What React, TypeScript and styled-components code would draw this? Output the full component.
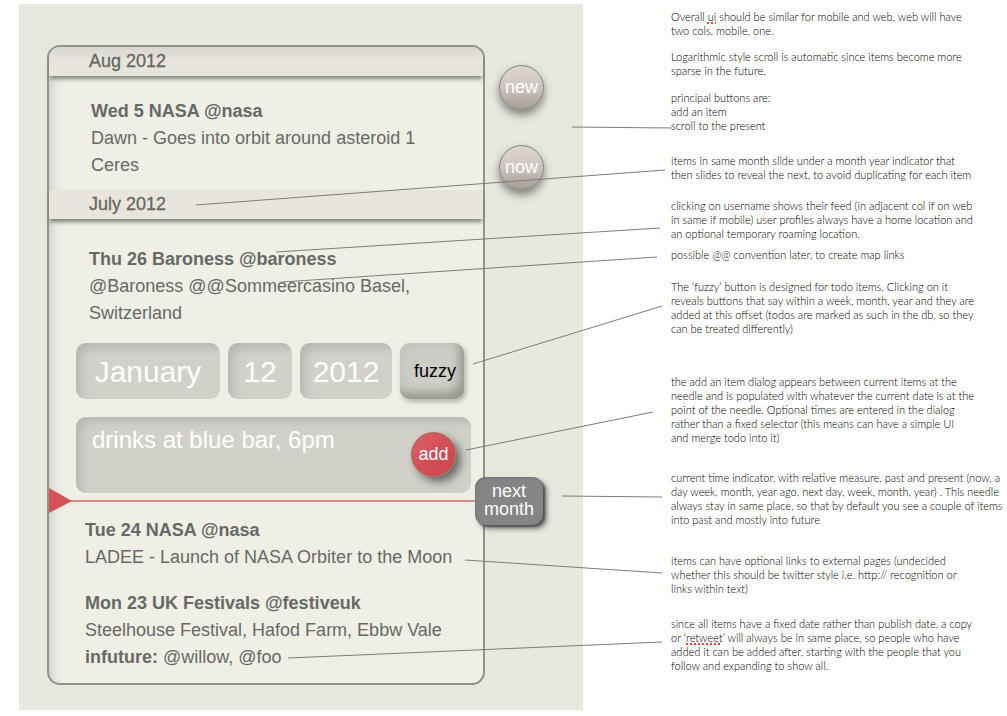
import React from "react";
import styled, { createGlobalStyle } from "styled-components";

const GlobalStyle = createGlobalStyle`
  * { box-sizing: border-box; }
  body {
    margin: 0;
    background: #fff;
    font-family: "Liberation Sans", Arial, sans-serif;
  }
`;

const Page = styled.div`
  position: relative;
  display: grid;
  grid-template-columns: minmax(0, 564px) minmax(0, 1fr);
  padding: 4px 0 6px 19px;
`;

const Board = styled.main`
  display: flex;
  align-items: flex-start;
  gap: 14px;
  padding: 41px 16px 25px 28px;
  background: #e7e9df;
`;

const Card = styled.section`
  flex: 0 1 438px;
  min-width: 0;
  border: 2px solid #92938f;
  border-radius: 13px;
  background: linear-gradient(to right, #d4d4cc 0, #e6e6de 6px, #efefe6 14px);
`;

const MonthHeader = styled.h2<{ $first?: boolean }>`
  position: relative;
  margin: 0;
  padding-left: 40px;
  height: 29px;
  line-height: 29px;
  font-size: 18px;
  font-weight: 400;
  color: #666663;
  -webkit-text-stroke: 0.3px #666663;
  border-radius: ${(p) => (p.$first ? "11px 11px 0 0" : "0")};
  background: ${(p) =>
    p.$first ? "linear-gradient(#d9d6cf 0, #e7e4dc 13px)" : "#e8e5dd"};
  box-shadow: 0 4px 4px -1px rgba(95, 97, 88, 0.75);
`;

const Items = styled.div<{ $indent: number; $top: number; $bottom: number }>`
  display: flex;
  flex-direction: column;
  gap: 19px;
  padding: ${(p) => `${p.$top}px 20px ${p.$bottom}px ${p.$indent}px`};
`;

const Item = styled.article`
  font-size: 18px;
  line-height: 27px;
  color: #686866;
`;

const ItemTitle = styled.h3`
  margin: 0;
  font-size: 18px;
  font-weight: 700;
`;

const ItemText = styled.p`
  margin: 0;
`;

const UserLink = styled.a`
  color: inherit;
  text-decoration: none;
`;

const Composer = styled.form`
  position: relative;
  display: flex;
  flex-direction: column;
  gap: 18px;
  padding: 0 12px 0 27px;
`;

const FieldRow = styled.div`
  display: flex;
  gap: 8px;
`;

const DateField = styled.input<{ $width: number }>`
  flex: 0 1 ${(p) => p.$width}px;
  min-width: 0;
  height: 56px;
  padding: 2px 0 0;
  border: 0;
  border-radius: 10px;
  background: #d1d1ca;
  box-shadow: inset 6px 6px 9px -1px #b7b8b1;
  color: #fff;
  font: 30px "Liberation Sans", Arial, sans-serif;
  text-align: center;
`;

const FuzzyButton = styled.button`
  flex: 0 1 64px;
  height: 56px;
  padding: 0 0 0 6px;
  border: 0;
  border-radius: 10px;
  background: #cdcec6;
  box-shadow: inset -7px -9px 10px -2px #989990, inset 4px 4px 8px #c3c4bc,
    2px 3px 5px rgba(90, 90, 80, 0.4);
  color: #000;
  font: 18px "Liberation Sans", Arial, sans-serif;
`;

const NoteField = styled.textarea`
  display: block;
  width: 100%;
  height: 76px;
  padding: 8px 16px;
  border: 0;
  border-radius: 10px;
  resize: none;
  overflow: hidden;
  background: #d1d1ca;
  box-shadow: inset 6px 6px 9px -1px #b7b8b1;
  color: #fff;
  font: 24px/30px "Liberation Sans", Arial, sans-serif;
`;

const RoundButton = styled.button`
  width: 45px;
  height: 45px;
  padding: 0;
  border: 1px solid #85807b;
  border-radius: 50%;
  background: linear-gradient(#ddd5ce 0, #cdc5be 50%, #a59d97 100%);
  box-shadow: 0 5px 9px rgba(60, 60, 55, 0.6);
  color: #fff;
  font: 18px "Liberation Sans", Arial, sans-serif;
`;

const AddButton = styled(RoundButton)`
  position: absolute;
  right: 27px;
  bottom: 16px;
  border-color: #a8635f;
  background: linear-gradient(135deg, #d9666a 0, #d44f55 50%, #cc474d 100%);
  box-shadow: 5px 5px 9px rgba(60, 60, 55, 0.7);
`;

const Needle = styled.div`
  position: relative;
  height: 24px;
`;

const Pointer = styled.svg`
  position: absolute;
  left: 0;
  top: -6px;
  width: 100%;
  height: 27px;
`;

const NeedleButton = styled.button`
  position: absolute;
  right: -60px;
  top: -16px;
  width: 68px;
  height: 48px;
  padding: 0 0 2px;
  border: 0;
  border-radius: 11px;
  background: #858585;
  box-shadow: inset 1px 1px 3px #757575, 2px 2px 2px #555,
    4px 4px 5px rgba(60, 60, 60, 0.6);
  color: #fff;
  font: 18px/18px "Liberation Sans", Arial, sans-serif;
`;

const Actions = styled.nav`
  display: flex;
  flex-direction: column;
  gap: 35px;
  padding-top: 20px;
`;

const Notes = styled.aside`
  padding: 6px 0 0 88px;
`;

const Note = styled.p<{ $gap: number }>`
  margin: ${(p) => p.$gap}px 0 0;
  font: 300 11px/14px Lato, "Open Sans", sans-serif;
  color: #000;
  white-space: nowrap;
`;

const Misspelt = styled.span`
  text-decoration: underline dotted #f0403c 2px;
  text-underline-offset: 1px;
`;

const Leaders = styled.svg`
  position: absolute;
  inset: 0;
  width: 100%;
  height: 100%;
  pointer-events: none;
`;

const leaders = [
  [572, 127, 672, 128],
  [196, 205, 665, 170],
  [276, 252, 660, 228],
  [282, 282, 657, 257],
  [473, 364, 662, 306],
  [466, 450, 653, 412],
  [562, 496, 662, 497],
  [465, 560, 662, 573],
  [288, 658, 662, 642],
];

const notes: { gap: number; lines: React.ReactNode[] }[] = [
  {
    gap: 0,
    lines: [
      <>Overall <Misspelt>ui</Misspelt> should be similar for mobile and web. web will have</>,
      "two cols, mobile, one.",
    ],
  },
  {
    gap: 12,
    lines: [
      "Logarithmic style scroll is automatic since items become more",
      "sparse in the future.",
    ],
  },
  { gap: 13, lines: ["principal buttons are:", "add an item", "scroll to the present"] },
  {
    gap: 21,
    lines: [
      "items in same month slide under a month year indicator that",
      "then slides to reveal the next, to avoid duplicating for each item",
    ],
  },
  {
    gap: 17,
    lines: [
      "clicking on username shows their feed (in adjacent col if on web",
      "in same if mobile) user profiles always have a home location and",
      "an optional temporary roaming location.",
    ],
  },
  { gap: 7, lines: ["possible @@ convention later, to create map links"] },
  {
    gap: 18,
    lines: [
      "The ‘fuzzy’ button is designed for todo items. Clicking on it",
      "reveals buttons that say within a week, month, year and they are",
      "added at this offset (todos are marked as such in the db, so they",
      "can be treated differently)",
    ],
  },
  {
    gap: 39,
    lines: [
      "the add an item dialog appears between current items at the",
      "needle and is populated with whatever the current date is at the",
      "point of the needle. Optional times are entered in the dialog",
      "rather than a fixed selector (this means can have a simple UI",
      "and merge todo into it)",
    ],
  },
  {
    gap: 26,
    lines: [
      "current time indicator, with relative measure, past and present (now, a",
      "day week, month, year ago, next day, week, month, year) . This needle",
      "always stay in same place, so that by default you see a couple of items",
      "into past and mostly into future",
    ],
  },
  {
    gap: 27,
    lines: [
      "items can have optional links to external pages (undecided",
      "whether this should be twitter style i.e. http:// recognition or",
      "links within text)",
    ],
  },
  {
    gap: 21,
    lines: [
      "since all items have a fixed date rather than publish date, a copy",
      <>or ‘<Misspelt>retweet</Misspelt>’ will always be in same place, so people who have</>,
      "added it can be added after, starting with the people that you",
      "follow and expanding to show all.",
    ],
  },
];

export default function App() {
  return (
    <Page>
      <GlobalStyle />
      <Board>
        <Card>
          <MonthHeader $first>Aug 2012</MonthHeader>
          <Items $indent={42} $top={22} $bottom={11}>
            <Item>
              <ItemTitle>Wed 5 NASA <UserLink href="#nasa">@nasa</UserLink></ItemTitle>
              <ItemText>Dawn - Goes into orbit around asteroid 1<br />Ceres</ItemText>
            </Item>
          </Items>
          <MonthHeader>July 2012</MonthHeader>
          <Items $indent={40} $top={27} $bottom={16}>
            <Item>
              <ItemTitle>Thu 26 Baroness <UserLink href="#baroness">@baroness</UserLink></ItemTitle>
              <ItemText>
                <UserLink href="#baroness">@Baroness</UserLink>{" "}
                <UserLink href="#map">@@Sommeercasino</UserLink> Basel,
                <br />
                Switzerland
              </ItemText>
            </Item>
          </Items>
          <Composer onSubmit={(e) => e.preventDefault()}>
            <FieldRow>
              <DateField $width={144} aria-label="Month" defaultValue="January" />
              <DateField $width={64} aria-label="Day" defaultValue="12" />
              <DateField $width={92} aria-label="Year" defaultValue="2012" />
              <FuzzyButton type="button">fuzzy</FuzzyButton>
            </FieldRow>
            <NoteField aria-label="Item text" defaultValue="drinks at blue bar, 6pm" />
            <AddButton type="submit">add</AddButton>
          </Composer>
          <Needle>
            <Pointer aria-hidden="true">
              <rect x="20" y="13" width="100%" height="2" fill="#dd8a87" />
              <path d="M0 1L23 14L0 26Z" fill="#d55258" />
            </Pointer>
            <NeedleButton type="button">next<br />month</NeedleButton>
          </Needle>
          <Items $indent={36} $top={0} $bottom={12}>
            <Item>
              <ItemTitle>Tue 24 NASA <UserLink href="#nasa">@nasa</UserLink></ItemTitle>
              <ItemText>LADEE - Launch of NASA Orbiter to the Moon</ItemText>
            </Item>
            <Item>
              <ItemTitle>Mon 23 UK Festivals <UserLink href="#festiveuk">@festiveuk</UserLink></ItemTitle>
              <ItemText>
                Steelhouse Festival, Hafod Farm, Ebbw Vale
                <br />
                <b>infuture:</b> <UserLink href="#willow">@willow</UserLink>,{" "}
                <UserLink href="#foo">@foo</UserLink>
              </ItemText>
            </Item>
          </Items>
        </Card>
        <Actions>
          <RoundButton type="button">new</RoundButton>
          <RoundButton type="button">now</RoundButton>
        </Actions>
      </Board>
      <Notes>
        {notes.map((note, i) => (
          <Note key={i} $gap={note.gap}>
            {note.lines.map((line, j) => (
              <React.Fragment key={j}>
                {j > 0 && <br />}
                {line}
              </React.Fragment>
            ))}
          </Note>
        ))}
      </Notes>
      <Leaders aria-hidden="true">
        {leaders.map(([x1, y1, x2, y2]) => (
          <line key={y1} x1={x1} y1={y1} x2={x2} y2={y2} stroke="#7c7c78" strokeWidth="1" />
        ))}
      </Leaders>
    </Page>
  );
}
